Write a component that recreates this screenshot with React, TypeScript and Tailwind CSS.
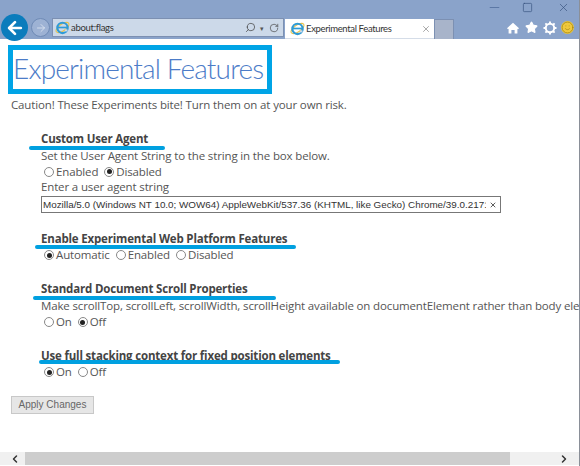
import React from "react";
import { Search, RotateCw, X, ArrowLeft, ArrowRight, ChevronLeft, ChevronRight, Star, Minus, Square, Smile } from "lucide-react";

const IeLogo = () => (
  <svg width="15" height="15" viewBox="0 0 18 18" className="shrink-0">
    <ellipse cx="9" cy="9" rx="9" ry="4" fill="none" stroke="#e8c24a" strokeWidth="1.3" transform="rotate(-35 9 9)" />
    <circle cx="9" cy="9.5" r="6.2" fill="none" stroke="#2f9bd6" strokeWidth="2.6" />
    <path d="M3.5 9h11" stroke="#2f9bd6" strokeWidth="2" />
    <path d="M12 12.5l3 0" stroke="#ccd9e9" strokeWidth="2.4" />
  </svg>
);

const HomeIcon = () => (
  <svg width="12" height="12" viewBox="0 0 12 12" className="mr-[6px]" fill="white">
    <path d="M6 .8 12 6.2 11 7.2 10.4 6.7V11.5H7.6V8H4.4V11.5H1.6V6.7L1 7.2 0 6.2Z" />
  </svg>
);

const GearIcon = () => (
  <svg width="14" height="14" viewBox="0 0 14 14" className="mr-[4px]">
    <circle cx="7" cy="7" r="4.2" fill="none" stroke="white" strokeWidth="2" />
    <path d="M7 .5v2.5M7 11v2.5M.5 7H3M11 7h2.5M2.4 2.4l1.8 1.8M9.8 9.8l1.8 1.8M2.4 11.6l1.8-1.8M9.8 4.2l1.8-1.8" stroke="white" strokeWidth="1.9" />
  </svg>
);

const Radio = ({ label, checked }: { label: string; checked?: boolean }) => (
  <span className="flex items-center mr-[3px]">
    <span className="w-[10px] h-[10px] ml-[3px] mr-[2px] rounded-full border border-[#888] flex items-center justify-center bg-white">
      {checked && <span className="w-[5px] h-[5px] rounded-full bg-[#222]" />}
    </span>
    <span>{label}</span>
  </span>
);

const Line = ({ className }: { className: string }) => (
  <div className={"absolute h-[4px] rounded-full bg-[#00a0e0] " + className} />
);

const Heading = ({ children }: { children: React.ReactNode }) => (
  <div className="font-bold text-[#444] tracking-[-0.18px]">{children}</div>
);

export default function App() {
  return (
    <div className="relative w-[580px] h-[466px] overflow-hidden bg-white flex flex-col font-['Open_Sans',sans-serif] text-[11.5px] leading-[16px] tracking-[-0.14px] text-[#555] border-r border-[#8a8f98]">
      <header className="h-[39px] shrink-0 bg-[#8aa3ca] flex flex-col font-['Lato',sans-serif] tracking-normal">
        <div className="h-[15px] flex justify-end text-[#34507c]">
          <Minus size={15} strokeWidth={1.2} className="mr-[20px] text-[#4c6a98]" />
          <Square size={11} strokeWidth={1.4} className="mt-[2px] mr-[24px]" />
          <X size={13} strokeWidth={1.2} className="mt-[1px] mr-[9px]" />
        </div>
        <div className="h-[24px] flex items-end">
          <div className="relative z-10 w-[27px] h-[27px] ml-[1px] mb-[-2px] rounded-full bg-[#0b7cbc] flex items-center justify-center text-white shrink-0">
            <ArrowLeft size={20} strokeWidth={3.2} />
          </div>
          <div className="w-[19px] h-[19px] ml-[3px] mb-[2px] rounded-full bg-[#9db2d4] border border-[#6f8bb6] flex items-center justify-center text-[#dfe7f2] shrink-0">
            <ArrowRight size={12} strokeWidth={1.6} />
          </div>
          <div className="w-[232px] h-[19px] ml-[2px] mb-[2px] bg-[#ccd9e9] border border-[#7c90b2] flex items-center pl-[2px] text-[9.5px] tracking-[-0.3px] text-[#333] shrink-0">
            <IeLogo />
            <span className="ml-[1px] flex-1">about:flags</span>
            <Search size={11} strokeWidth={1.6} className="text-[#444] mr-[4px] -scale-x-100" />
            <span className="text-[7px] text-[#555] mr-[5px]">▾</span>
            <RotateCw size={10} strokeWidth={1.6} className="text-[#444] mr-[4px]" />
          </div>
          <div className="w-[149px] h-[20px] ml-[1px] bg-white flex items-center pl-[5px] text-[9.5px] tracking-[-0.35px] text-[#333] shrink-0 border-b border-[#d5dde8]">
            <IeLogo />
            <span className="ml-[1px] flex-1">Experimental Features</span>
            <X size={10} strokeWidth={2} className="text-[#999] mr-[3px]" />
          </div>
          <div className="w-[20px] h-[20px] bg-[#a8b4ca] border border-[#7c90b2] border-b-0 shrink-0" />
          <div className="flex-1 h-[24px] flex items-center justify-end pr-[5px] pt-[1px] text-white">
            <HomeIcon />
            <Star size={13} fill="white" className="mr-[5px]" />
            <GearIcon />
            <span className="w-[13px] h-[13px] rounded-full bg-[#f0c93c] flex items-center justify-center text-[#a08418]">
              <Smile size={13} strokeWidth={1.4} />
            </span>
          </div>
        </div>
      </header>

      <main className="flex-1 flex flex-col items-start pt-[6px] min-h-0">
        <h1 className="ml-[8px] w-[264px] h-[49px] border-[5px] border-[#00a4e6] pb-[4px] flex items-center font-['Lato',sans-serif] font-light text-[28px] tracking-[-0.85px] leading-none text-[#4c7cc8] whitespace-nowrap">
          Experimental Features
        </h1>
        <p className="ml-[11px] mt-[3px]">Caution! These Experiments bite! Turn them on at your own risk.</p>

        <section className="ml-[41px] mt-[18px] w-[539px] whitespace-nowrap">
          <Heading>Custom User Agent</Heading>
          <div className="mt-[1px]">Set the User Agent String to the string in the box below.</div>
          <div className="flex h-[15px]">
            <Radio label="Enabled" />
            <Radio label="Disabled" checked />
          </div>
          <div>Enter a user agent string</div>
          <div className="mt-[1px] w-[460px] h-[17px] border border-[#777] flex items-center pl-[1px] pr-[3px] font-['Liberation_Sans',sans-serif] text-[9.85px] tracking-normal text-[#333] overflow-hidden">
            <span className="flex-1 overflow-hidden">Mozilla/5.0 (Windows NT 10.0; WOW64) AppleWebKit/537.36 (KHTML, like Gecko) Chrome/39.0.2171</span>
            <X size={8} strokeWidth={2.4} className="ml-[3px] shrink-0" />
          </div>
        </section>

        <section className="ml-[41px] mt-[18px] whitespace-nowrap">
          <Heading>Enable Experimental Web Platform Features</Heading>
          <div className="flex">
            <Radio label="Automatic" checked />
            <Radio label="Enabled" />
            <Radio label="Disabled" />
          </div>
        </section>

        <section className="ml-[41px] mt-[18px] w-[539px] whitespace-nowrap overflow-hidden">
          <Heading>Standard Document Scroll Properties</Heading>
          <div className="mt-[1px]">Make scrollTop, scrollLeft, scrollWidth, scrollHeight available on documentElement rather than body elements</div>
          <div className="flex">
            <Radio label="On" />
            <Radio label="Off" checked />
          </div>
        </section>

        <section className="ml-[41px] mt-[18px] whitespace-nowrap">
          <Heading>Use full stacking context for fixed position elements</Heading>
          <div className="flex">
            <Radio label="On" checked />
            <Radio label="Off" />
          </div>
        </section>

        <button className="ml-[11px] mt-[16px] w-[83px] h-[18px] bg-[#e6e6e6] border border-[#c8c8c8] text-[10px] tracking-normal text-[#666] font-['Liberation_Sans',sans-serif]">
          Apply Changes
        </button>
      </main>

      <footer className="h-[13px] mb-[1px] shrink-0 bg-[#f0f0f0] flex items-center text-[#333]">
        <ChevronLeft size={12} strokeWidth={3} className="ml-[9px]" />
        <div className="ml-[4px] w-[485px] h-full bg-[#cdcdcd]" />
        <div className="flex-1" />
        <ChevronRight size={12} strokeWidth={3} className="mr-[9px]" />
      </footer>

      <Line className="left-[29px] top-[146px] w-[136px]" />
      <Line className="left-[35px] top-[245px] w-[261px]" />
      <Line className="left-[33px] top-[296px] w-[243px]" />
      <Line className="left-[39px] top-[360px] w-[301px]" />
    </div>
  );
}
